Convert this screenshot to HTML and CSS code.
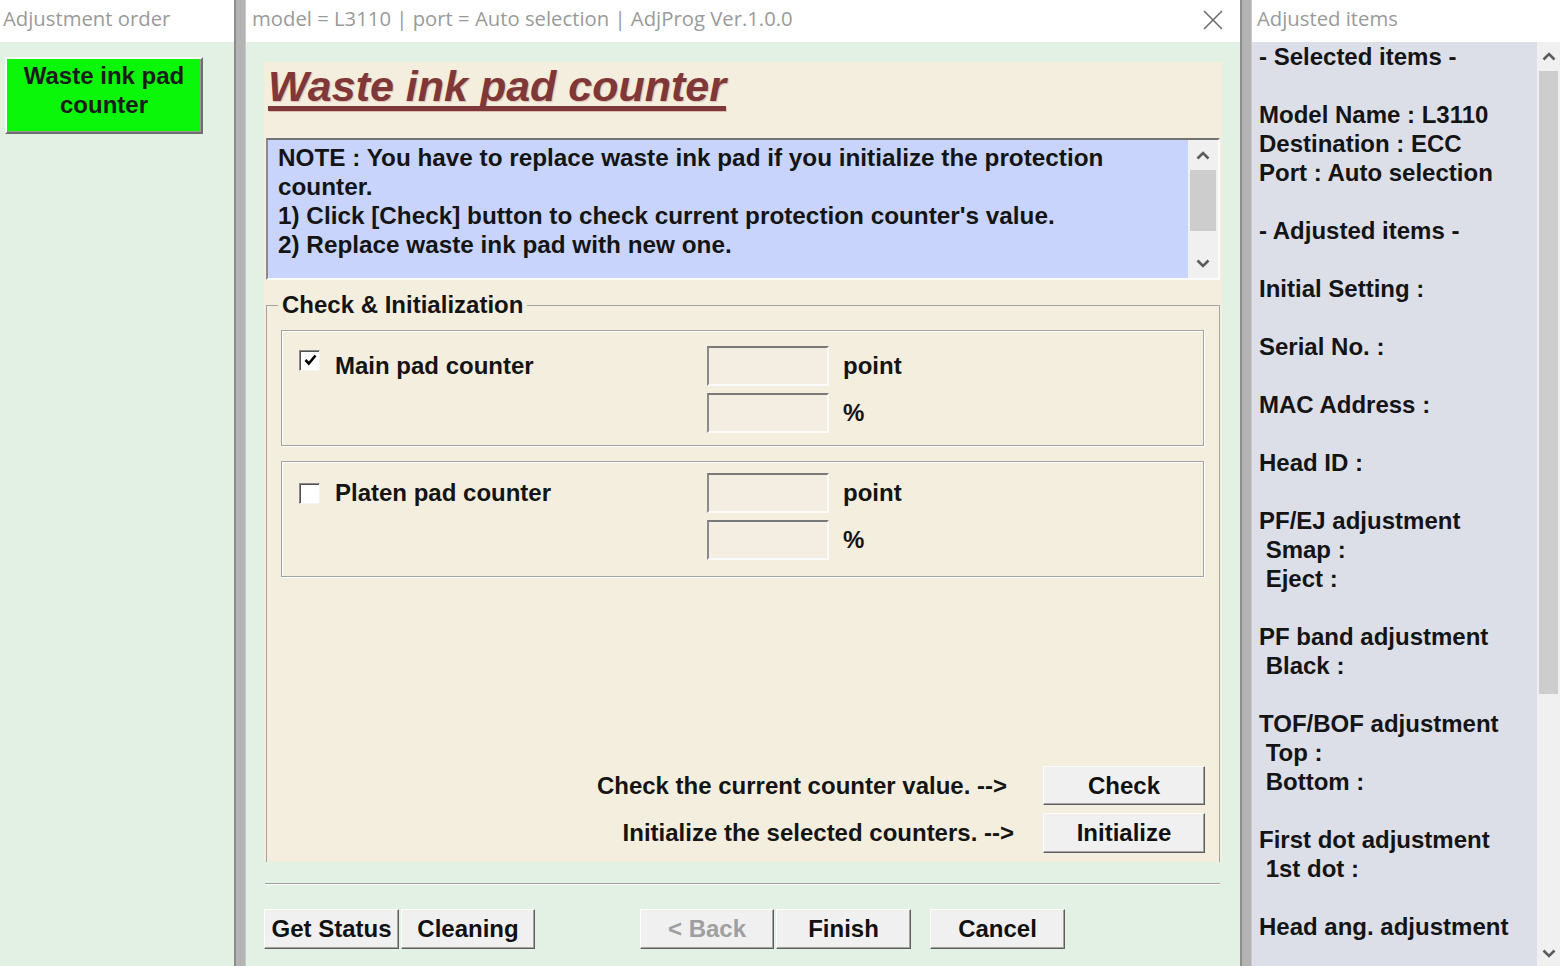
FILE: index.html
```html
<!DOCTYPE html>
<html lang="en">
<head>
<meta charset="utf-8">
<title>AdjProg - Waste ink pad counter</title>
<link rel="stylesheet" href="styles.css">
</head>
<body>
<div class="screen">
  <section class="pane pane-left">
    <div class="titlebar">Adjustment order</div>
    <div class="pane-body green">
      <div class="step-btn">Waste ink pad<br>counter</div>
    </div>
  </section>

  <div class="splitter"></div>

  <section class="pane pane-main">
    <div class="titlebar titlebar-main">
      <span class="title-text">model = L3110 | port = Auto selection | AdjProg Ver.1.0.0</span>
      <svg class="close" width="20" height="20" viewBox="0 0 20 20" aria-hidden="true">
        <path d="M1 1 L19 19 M19 1 L1 19" stroke="#6e6e6e" stroke-width="1.6" fill="none"/>
      </svg>
    </div>
    <div class="pane-body green main-body">
      <div class="card">
        <h1 class="page-title">Waste ink pad counter</h1>
        <div class="note">
          <div class="note-text">NOTE : You have to replace waste ink pad if you initialize the protection counter.<br>1) Click [Check] button to check current protection counter's value.<br>2) Replace waste ink pad with new one.</div>
          <div class="scrollbar note-scroll">
            <div class="sb-arrow"><svg width="14" height="9" viewBox="0 0 14 9"><path d="M1.5 7.5 L7 2 L12.5 7.5" stroke="#5c5c5c" stroke-width="2.6" fill="none"/></svg></div>
            <div class="sb-thumb note-thumb"></div>
            <div class="sb-fill"></div>
            <div class="sb-arrow"><svg width="14" height="9" viewBox="0 0 14 9"><path d="M1.5 1.5 L7 7 L12.5 1.5" stroke="#5c5c5c" stroke-width="2.6" fill="none"/></svg></div>
          </div>
        </div>

        <fieldset class="group">
          <legend>Check &amp; Initialization</legend>
          <div class="group-body">
            <div class="counter-box main-pad">
              <div class="counter-label">
                <span class="checkbox checked"><svg width="15" height="15" viewBox="0 0 15 15"><path d="M2.5 7 L5.8 10.5 L12.5 2.5" stroke="#000" stroke-width="2.6" fill="none"/></svg></span>
                <span>Main pad counter</span>
              </div>
              <div class="field"></div>
              <div class="unit">point</div>
              <div></div>
              <div class="field"></div>
              <div class="unit">%</div>
            </div>

            <div class="counter-box platen-pad">
              <div class="counter-label">
                <span class="checkbox"></span>
                <span>Platen pad counter</span>
              </div>
              <div class="field"></div>
              <div class="unit">point</div>
              <div></div>
              <div class="field"></div>
              <div class="unit">%</div>
            </div>

            <div class="actions">
              <div class="action-row">
                <span class="action-text a1">Check the current counter value. --&gt;</span>
                <button class="btn btn-wide">Check</button>
              </div>
              <div class="action-row">
                <span class="action-text a2">Initialize the selected counters. --&gt;</span>
                <button class="btn btn-wide">Initialize</button>
              </div>
            </div>
          </div>
        </fieldset>
      </div>

      <div class="separator"></div>

      <div class="footer">
        <div class="btn-pair">
          <button class="btn btn-foot">Get Status</button>
          <button class="btn btn-foot">Cleaning</button>
        </div>
        <div class="btn-pair nav">
          <button class="btn btn-foot disabled">&lt; Back</button>
          <button class="btn btn-foot">Finish</button>
        </div>
        <button class="btn btn-foot cancel">Cancel</button>
      </div>
    </div>
  </section>

  <div class="splitter"></div>

  <section class="pane pane-right">
    <div class="titlebar">Adjusted items</div>
    <div class="info-wrap">
<pre class="info">- Selected items -

Model Name : L3110
Destination : ECC
Port : Auto selection

- Adjusted items -

Initial Setting :

Serial No. :

MAC Address :

Head ID :

PF/EJ adjustment
 Smap :
 Eject :

PF band adjustment
 Black :

TOF/BOF adjustment
 Top :
 Bottom :

First dot adjustment
 1st dot :

Head ang. adjustment</pre>
      <div class="scrollbar side-scroll">
        <div class="sb-arrow"><svg width="14" height="9" viewBox="0 0 14 9"><path d="M1.5 7.5 L7 2 L12.5 7.5" stroke="#5c5c5c" stroke-width="2.6" fill="none"/></svg></div>
        <div class="sb-thumb side-thumb"></div>
        <div class="sb-fill"></div>
        <div class="sb-arrow"><svg width="14" height="9" viewBox="0 0 14 9"><path d="M1.5 1.5 L7 7 L12.5 1.5" stroke="#5c5c5c" stroke-width="2.6" fill="none"/></svg></div>
      </div>
    </div>
  </section>
</div>
</body>
</html>
```

FILE: styles.css
```css
* { box-sizing: border-box; }

html, body {
  margin: 0;
  padding: 0;
}

body {
  width: 1560px;
  height: 966px;
  overflow: hidden;
  font-family: "Liberation Sans", Arial, sans-serif;
  font-weight: bold;
  font-size: 24px;
  color: #141414;
  background: #e3f1e4;
}

.screen {
  display: flex;
  height: 966px;
}

.pane {
  display: flex;
  flex-direction: column;
  height: 966px;
}

.pane-left { width: 234px; }
.pane-main { width: 994px; }
.pane-right { width: 308px; }

.splitter {
  width: 12px;
  background: #b4b4b4;
  border-left: 2px solid #8d8d8d;
  border-right: 1px solid #c9c9c9;
}

.titlebar {
  height: 42px;
  flex: none;
  background: #fff;
  font-family: "Open Sans", "Noto Sans", sans-serif;
  font-weight: normal;
  font-size: 20.3px;
  color: #9a9a9a;
  display: flex;
  align-items: center;
  padding: 0 0 6px 3px;
  white-space: nowrap;
  overflow: hidden;
}

.titlebar-main {
  justify-content: space-between;
  padding-left: 6px;
  padding-right: 17px;
}

.pane-right .titlebar { padding-left: 5px; }

.close { flex: none; margin-top: 4px; }

.pane-body { flex: 1; }
.green { background: #e3f1e4; }

/* left step button */
.pane-left .pane-body { padding: 15px 0 0 5px; }

.step-btn {
  width: 198px;
  height: 77px;
  background: #0af70a;
  border: 2px solid;
  border-color: #fbfbfb #6e6e6e #6e6e6e #fbfbfb;
  box-shadow: inset -1px -1px 0 #9a9a9a;
  text-align: center;
  line-height: 29px;
  padding-top: 2px;
  color: #1b1b1b;
}

/* main */
.main-body {
  padding: 20px 18px 0 18px;
}

.card {
  height: 800px;
  background: #f4eedf;
  padding: 0 2px;
  display: flex;
  flex-direction: column;
}

.page-title {
  margin: 0;
  height: 76px;
  padding-left: 2px;
  font-size: 43px;
  line-height: 48px;
  font-style: italic;
  font-weight: bold;
  color: #7f3737;
  text-shadow: 1px 1px 1px #d9bfb0;
  text-decoration: underline;
  text-decoration-thickness: 5px;
  text-underline-offset: 5px;
  text-decoration-color: #7f3737;
  text-decoration-skip-ink: none;
}

.note {
  height: 142px;
  flex: none;
  display: flex;
  background: #c8d4fc;
  border: 2px solid;
  border-color: #727272 #fbfbfb #fbfbfb #8a8a8a;
}

.note-text {
  flex: 1;
  padding: 3px 6px 0 10px;
  line-height: 29px;
  font-size: 24.3px;
}

.scrollbar {
  background: #f0f0f0;
  display: flex;
  flex-direction: column;
  align-items: center;
}

.note-scroll { width: 30px; }

.sb-arrow {
  height: 30px;
  flex: none;
  display: flex;
  align-items: center;
  justify-content: center;
}

.sb-thumb { background: #cdcdcd; flex: none; }
.note-thumb { width: 26px; height: 61px; }
.sb-fill { flex: 1; }

/* group */
.group {
  margin: 12px 0 0 0;
  padding: 0;
  border: 1px solid #a4a4a4;
  border-bottom: none;
  flex: 1;
  min-width: 0;
}

.group legend {
  margin-left: 11px;
  padding: 0 4px;
  line-height: 26px;
}

.group-body {
  padding: 12px 15px 9px 14px;
}

.counter-box {
  height: 116px;
  border: 1px solid #a2a2a2;
  box-shadow: inset 1px 1px 0 #fff, 1px 1px 0 #fff;
  display: grid;
  grid-template-columns: 408px 122px auto;
  grid-template-rows: 40px 40px;
  row-gap: 7px;
  padding: 15px 0 0 17px;
}

.counter-box.platen-pad {
  margin-top: 15px;
  padding-top: 11px;
}

.counter-label {
  display: flex;
  align-items: flex-start;
  line-height: 40px;
}

.checkbox {
  width: 21px;
  height: 21px;
  flex: none;
  margin-top: 4px;
  margin-right: 15px;
  background: #fff;
  border: 1px solid;
  border-color: #8a8a8a #f4f4f4 #f4f4f4 #8a8a8a;
  box-shadow: inset 1px 1px 0 #505050;
  display: flex;
  align-items: center;
  justify-content: center;
}

.platen-pad .checkbox { margin-top: 10px; }

.checkbox svg { margin: 0 0 1px 1px; }

.field {
  border: 2px solid;
  border-color: #7a7a7a #fbfbfb #fbfbfb #8a8a8a;
  background: #f3eee1;
}

.unit {
  padding-left: 14px;
  line-height: 40px;
}

.actions {
  margin-top: 189px;
  display: flex;
  flex-direction: column;
  gap: 8px;
}

.action-row {
  display: flex;
  justify-content: flex-end;
  align-items: center;
}

.action-text.a1 { margin-right: 36px; }
.action-text.a2 { margin-right: 29px; }

.btn {
  font-family: inherit;
  font-weight: bold;
  font-size: 24px;
  color: #111;
  height: 40px;
  background: #f0f0f0;
  border: 1px solid;
  border-color: #fcfcfc #5e5e5e #5e5e5e #fcfcfc;
  box-shadow: inset -1px -1px 0 #a4a4a4;
  padding: 0;
  margin: 0;
}

.btn-wide { width: 162px; margin-right: -1px; }
.action-row:first-child .btn-wide { height: 39px; }

/* footer */
.separator {
  margin: 21px 2px 0 1px;
  height: 2px;
  border-top: 1px solid #a0a0a0;
  border-bottom: 1px solid #fbfbfb;
}

.footer {
  margin-top: 24px;
  display: flex;
}

.btn-pair {
  display: flex;
  gap: 2px;
}

.btn-foot { width: 135px; }
.btn-pair .btn-foot:nth-child(2) { width: 134px; }
.nav { margin-left: 105px; }
.nav .btn-foot:first-child { width: 134px; }
.nav .btn-foot:nth-child(2) { width: 135px; }
.cancel { margin-left: 19px; }
.disabled { color: #9f9f9f; }

/* right pane */
.info-wrap {
  flex: 1;
  display: flex;
  min-height: 0;
}

.info {
  flex: 1;
  margin: 0;
  padding: 0 0 0 7px;
  background: #dcdfe8;
  font-family: inherit;
  font-weight: bold;
  font-size: 24px;
  line-height: 29px;
  white-space: pre;
  overflow: hidden;
  color: #141414;
}

.side-scroll { width: 23px; }
.side-thumb { width: 19px; height: 623px; }
.side-scroll .sb-arrow { height: 29px; }
.side-scroll .sb-arrow:last-child { height: 26px; }
```
